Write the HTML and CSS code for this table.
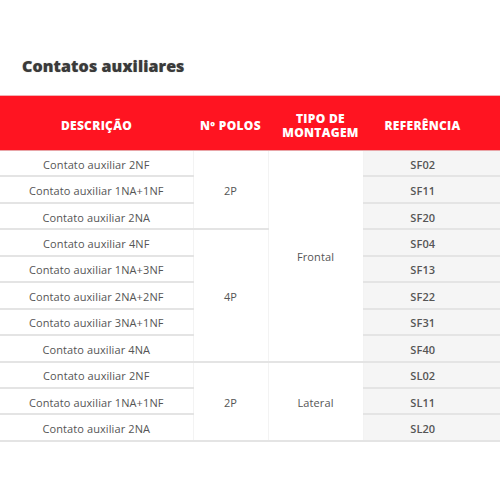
FILE: index.html
```html
<!DOCTYPE html>
<html lang="pt">
<head>
<meta charset="utf-8">
<link rel="stylesheet" href="styles.css">
</head>
<body>
<h2 class="title">Contatos auxiliares</h2>
<table class="tbl">
  <colgroup>
    <col class="c1"><col class="c2"><col class="c3"><col class="c4">
  </colgroup>
  <thead>
    <tr>
      <th>DESCRIÇÃO</th>
      <th>Nº POLOS</th>
      <th class="h3">TIPO DE<br>MONTAGEM</th>
      <th class="h4">REFERÊNCIA</th>
    </tr>
  </thead>
  <tbody>
    <tr><td>Contato auxiliar 2NF</td><td rowspan="3" class="mid">2P</td><td rowspan="8" class="mid">Frontal</td><td class="ref">SF02</td></tr>
    <tr><td>Contato auxiliar 1NA+1NF</td><td class="ref">SF11</td></tr>
    <tr><td>Contato auxiliar 2NA</td><td class="ref">SF20</td></tr>
    <tr><td>Contato auxiliar 4NF</td><td rowspan="5" class="mid">4P</td><td class="ref">SF04</td></tr>
    <tr><td>Contato auxiliar 1NA+3NF</td><td class="ref">SF13</td></tr>
    <tr><td>Contato auxiliar 2NA+2NF</td><td class="ref">SF22</td></tr>
    <tr><td>Contato auxiliar 3NA+1NF</td><td class="ref">SF31</td></tr>
    <tr><td>Contato auxiliar 4NA</td><td class="ref">SF40</td></tr>
    <tr><td>Contato auxiliar 2NF</td><td rowspan="3" class="mid">2P</td><td rowspan="3" class="mid">Lateral</td><td class="ref">SL02</td></tr>
    <tr><td>Contato auxiliar 1NA+1NF</td><td class="ref">SL11</td></tr>
    <tr><td>Contato auxiliar 2NA</td><td class="ref">SL20</td></tr>
  </tbody>
</table>
</body>
</html>
```
FILE: styles.css
```css
html, body {
  margin: 0;
  padding: 0;
  background: #fff;
}
body {
  font-family: "Open Sans", "DejaVu Sans", sans-serif;
  color: #555;
}
.title {
  margin: 0;
  padding: 55px 0 0 22px;
  height: 40px;
  box-sizing: content-box;
  font-size: 16px;
  font-weight: 800;
  color: #3a3a3a;
  letter-spacing: 0.1px;
  text-shadow: 0 0 1px rgba(0,0,0,0.35);
}
.tbl {
  width: 100%;
  border-collapse: collapse;
  table-layout: fixed;
}
.c1 { width: 193px; }
.c2 { width: 75px; }
.c3 { width: 95px; }
.c4 { width: auto; }
.tbl thead th {
  background: #ff1421;
  color: #fff;
  font-size: 12px;
  font-weight: 800;
  letter-spacing: 0.3px;
  line-height: 13.5px;
  height: 49px;
  padding: 5px 0 0 0;
  border-top: 1px solid #f3b0b4;
  border-bottom: 1px solid #e8a5a8;
  text-align: center;
  vertical-align: middle;
}
.tbl thead th.h3 { padding-left: 10px; }
.tbl thead th.h4 { padding-right: 18px; }
.tbl td {
  font-size: 11px;
  letter-spacing: 0.1px;
  height: 22.45px;
  padding: 2px 0 0 0;
  text-align: center;
  vertical-align: middle;
  border-bottom: 2px solid #e4e4e4;
  border-left: 1px solid #f3f3f3;
  color: #555;
}
.tbl td:first-child { border-left: none; }
.tbl td.ref {
  background: #f5f5f5;
  font-weight: 600;
  padding-right: 18px;
  border-left: 1px solid #f3f3f3;
}
```
